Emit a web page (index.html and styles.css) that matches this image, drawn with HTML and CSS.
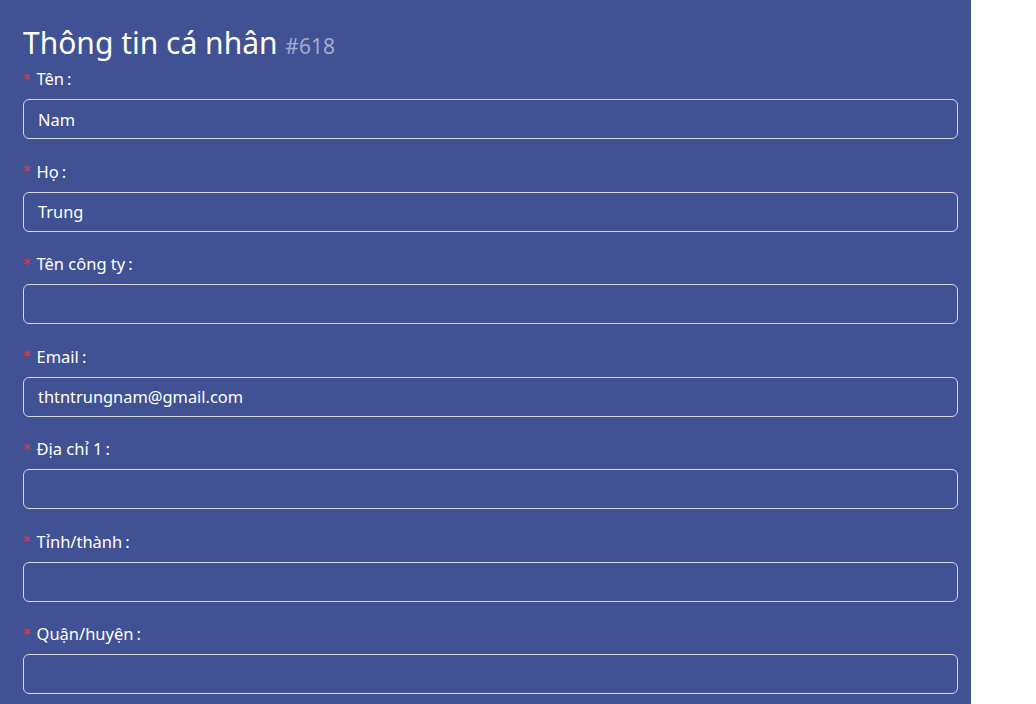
FILE: index.html
```html
<!DOCTYPE html>
<html lang="vi">
<head>
<meta charset="utf-8">
<link rel="stylesheet" href="styles.css">
</head>
<body>
<div class="panel">
  <h1 class="title">Thông tin cá nhân <span class="id">#618</span></h1>
  <div class="item"><label class="label"><span class="req">*</span>Tên<span class="colon">:</span></label><div class="input">Nam</div></div>
  <div class="item"><label class="label"><span class="req">*</span>Họ<span class="colon">:</span></label><div class="input">Trung</div></div>
  <div class="item"><label class="label"><span class="req">*</span>Tên công ty<span class="colon">:</span></label><div class="input"></div></div>
  <div class="item"><label class="label"><span class="req">*</span>Email<span class="colon">:</span></label><div class="input">thtntrungnam@gmail.com</div></div>
  <div class="item"><label class="label"><span class="req">*</span>Địa chỉ 1<span class="colon">:</span></label><div class="input"></div></div>
  <div class="item"><label class="label"><span class="req">*</span>Tỉnh/thành<span class="colon">:</span></label><div class="input"></div></div>
  <div class="item"><label class="label"><span class="req">*</span>Quận/huyện<span class="colon">:</span></label><div class="input"></div></div>
</div>
</body>
</html>
```

FILE: styles.css
```css
html, body {
  margin: 0;
  padding: 0;
  background: #ffffff;
}
body {
  font-family: "Noto Sans", "Open Sans", sans-serif;
  color: #ffffff;
}
.panel {
  width: 971px;
  height: 704px;
  overflow: hidden;
  box-sizing: border-box;
  background: #405194;
  padding: 20px 13px 0 23px;
}
.title {
  margin: 0;
  font-size: 30px;
  font-weight: 400;
  line-height: 46px;
  height: 46.5px;
}
.id {
  font-size: 21px;
  color: #a3abd0;
}
.item {
  margin-bottom: 20px;
}
.label {
  display: flex;
  align-items: center;
  height: 24.5px;
  padding-bottom: 8px;
  font-size: 16.5px;
}
.req {
  color: #e8344a;
  font-size: 15px;
  margin-right: 6px;
  margin-top: 2px;
  font-family: "DejaVu Sans", sans-serif;
}
.colon {
  margin-left: 3px;
}
.input {
  box-sizing: border-box;
  height: 40px;
  border: 1px solid #d9d9e3;
  border-radius: 6px;
  padding: 0 14px;
  display: flex;
  align-items: center;
  font-size: 16.4px;
}
```
